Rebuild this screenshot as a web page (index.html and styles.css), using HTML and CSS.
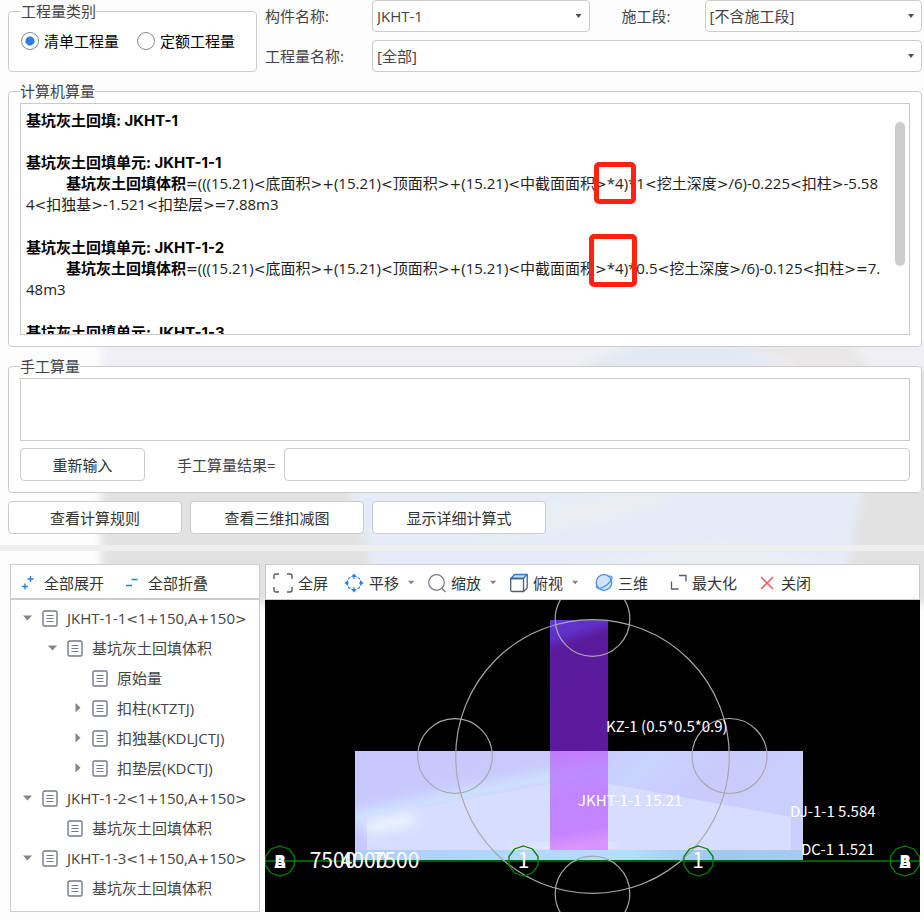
FILE: index.html
```html
<!DOCTYPE html>
<html lang="zh-CN">
<head>
<meta charset="utf-8">
<title>查看工程量计算式</title>
<link rel="stylesheet" href="styles.css">
</head>
<body>
<svg class="hidden" aria-hidden="true">
  <symbol id="doc" viewBox="0 0 16 17"><rect x="1" y="1" width="14" height="15" rx="1.5" fill="#fff" stroke="#747a8c" stroke-width="1.4"/><path d="M4.5 5.5h7M4.5 8.5h7M4.5 11.5h7" stroke="#747a8c" stroke-width="1.2"/></symbol>
  <symbol id="down" viewBox="0 0 10 6"><path d="M0 .5h9L4.500 5.500z" fill="#858585"/></symbol>
  <symbol id="right" viewBox="0 0 6 10"><path d="M.5 0v9.500L5.500 4.700z" fill="#858585"/></symbol>
</svg>

<div class="backdrop" aria-hidden="true">
  <svg viewBox="0 0 924 270" preserveAspectRatio="none">
    <defs><filter id="soft"><feGaussianBlur stdDeviation="5"/></filter></defs>
    <g filter="url(#soft)">
      <rect x="101" y="4" width="840" height="260" fill="#e2e2e2"/>
      <path d="M101 -10H940V30H101z" fill="#f1f0f6"/>
      <path d="M570 30L640 0H735L790 30z" fill="#e3e9f3"/>
      <path d="M735 0H850L870 30H800z" fill="#e9e7e8"/>
      <path d="M345 140H865L835 280H390z" fill="#e5ecf7"/>
      <path d="M470 180L690 145L620 175L480 200z" fill="#e9eff0"/>
      <path d="M500 240L720 205L860 230V270H500z" fill="#e8eff3"/>
    </g>
  </svg>
</div>

<main class="window">
  <section class="filters">
    <fieldset class="group kind">
      <legend>工程量类别</legend>
      <div class="radios">
        <label><input type="radio" name="kind" checked>清单工程量</label>
        <label><input type="radio" name="kind">定额工程量</label>
      </div>
    </fieldset>
    <div class="fields">
      <label for="component">构件名称:</label>
      <div class="select"><select id="component"><option>JKHT-1</option></select></div>
      <label class="second" for="stage">施工段:</label>
      <div class="select"><select id="stage"><option>[不含施工段]</option></select></div>
      <label for="quantity">工程量名称:</label>
      <div class="select wide"><select id="quantity"><option>[全部]</option></select></div>
    </div>
  </section>

  <fieldset class="group">
    <legend>计算机算量</legend>
    <div class="log">
      <div class="log-text">
        <div class="unit"><b>基坑灰土回填: JKHT-1</b></div>
        <div class="unit"><b>基坑灰土回填单元: JKHT-1-1</b><p><b>基坑灰土回填体积</b><i>=</i>(((15.21)<i>&lt;</i>底面积<i>&gt;+</i>(15.21)<i>&lt;</i>顶面积<i>&gt;+</i>(15.21)<i>&lt;</i>中截面面积<i>&gt;</i>*4)*1<i>&lt;</i>挖土深度<i>&gt;</i>/6)-0.225<i>&lt;</i>扣柱<i>&gt;</i>-5.58<br>4<i>&lt;</i>扣独基<i>&gt;</i>-1.521<i>&lt;</i>扣垫层<i>&gt;=</i>7.88m3</p></div>
        <div class="unit"><b>基坑灰土回填单元: JKHT-1-2</b><p><b>基坑灰土回填体积</b><i>=</i>(((15.21)<i>&lt;</i>底面积<i>&gt;+</i>(15.21)<i>&lt;</i>顶面积<i>&gt;+</i>(15.21)<i>&lt;</i>中截面面积<i>&gt;</i>*4)*0.5<i>&lt;</i>挖土深度<i>&gt;</i>/6)-0.125<i>&lt;</i>扣柱<i>&gt;=</i>7.<br>48m3</p></div>
        <div class="unit"><b>基坑灰土回填单元: JKHT-1-3</b></div>
      </div>
      <div class="thumb"></div>
      <div class="mark mark-a"></div>
      <div class="mark mark-b"></div>
    </div>
  </fieldset>

  <fieldset class="group manual">
    <legend>手工算量</legend>
    <textarea aria-label="手工算量"></textarea>
    <div class="result">
      <button type="button" class="btn">重新输入</button>
      <label for="result">手工算量结果=</label>
      <input id="result" type="text">
    </div>
  </fieldset>

  <div class="actions">
    <button type="button" class="btn">查看计算规则</button>
    <button type="button" class="btn">查看三维扣减图</button>
    <button type="button" class="btn">显示详细计算式</button>
  </div>

  <div class="splitter"></div>

  <section class="panes">
    <div class="pane tree-pane">
      <div class="bar tree-bar">
        <button type="button"><svg width="12" height="14" viewBox="0 0 12 14"><path d="M8.500 0v6M5.500 3h6M3 7.500v6M0 10.500h6" stroke="#2b7de0" stroke-width="1.400"/></svg>全部展开</button>
        <button type="button"><svg width="12" height="14" viewBox="0 0 12 14"><path d="M5.500 3.500h6M0 9.500h6" stroke="#2b7de0" stroke-width="1.400"/></svg>全部折叠</button>
      </div>
      <ul class="tree">
        <li class="l1"><svg class="tw"><use href="#down"/></svg><svg class="ic"><use href="#doc"/></svg><span>JKHT-1-1<i>&lt;</i>1<i>+</i>150,A<i>+</i>150<i>&gt;</i></span></li>
        <li class="l2"><svg class="tw"><use href="#down"/></svg><svg class="ic"><use href="#doc"/></svg>基坑灰土回填体积</li>
        <li class="l3"><span class="tw"></span><svg class="ic"><use href="#doc"/></svg>原始量</li>
        <li class="l3"><svg class="tw side"><use href="#right"/></svg><svg class="ic"><use href="#doc"/></svg>扣柱(KTZTJ)</li>
        <li class="l3"><svg class="tw side"><use href="#right"/></svg><svg class="ic"><use href="#doc"/></svg>扣独基(KDLJCTJ)</li>
        <li class="l3"><svg class="tw side"><use href="#right"/></svg><svg class="ic"><use href="#doc"/></svg>扣垫层(KDCTJ)</li>
        <li class="l1"><svg class="tw"><use href="#down"/></svg><svg class="ic"><use href="#doc"/></svg><span>JKHT-1-2<i>&lt;</i>1<i>+</i>150,A<i>+</i>150<i>&gt;</i></span></li>
        <li class="l2"><span class="tw"></span><svg class="ic"><use href="#doc"/></svg>基坑灰土回填体积</li>
        <li class="l1"><svg class="tw"><use href="#down"/></svg><svg class="ic"><use href="#doc"/></svg><span>JKHT-1-3<i>&lt;</i>1<i>+</i>150,A<i>+</i>150<i>&gt;</i></span></li>
        <li class="l2"><span class="tw"></span><svg class="ic"><use href="#doc"/></svg>基坑灰土回填体积</li>
      </ul>
    </div>

    <div class="pane view-pane">
      <div class="bar view-bar">
        <button type="button" class="plain"><svg width="20" height="20" viewBox="0 0 20 20"><path d="M1 6V3q0-2 2-2h3M14 1h3q2 0 2 2v3M19 14v3q0 2-2 2h-3M6 19H3q-2 0-2-2v-3" fill="none" stroke="#555b6b" stroke-width="1.400"/></svg>全屏</button>
        <button type="button"><svg width="20" height="20" viewBox="0 0 20 20"><g fill="#2b83e8"><path d="M10 .5l3 3.500H7zM10 19.500l3-3.500H7zM.5 10L4 7v6zM19.500 10L16 7v6z"/></g><path d="M10 3v3M10 14v3M3 10h2M15 10h2M4.500 6.500q0-2 2-2M13.500 4.500q2 0 2 2M15.500 13.500q0 2-2 2M6.500 15.500q-2 0-2-2" fill="none" stroke="#2b83e8" stroke-width="1.200"/></svg>平移<svg class="caret"><use href="#down"/></svg></button>
        <button type="button"><svg width="18" height="20" viewBox="0 0 18 20"><circle cx="8.500" cy="9.500" r="7.800" fill="none" stroke="#777c88" stroke-width="1.300"/><path d="M14 15.500l3.500 3.500" stroke="#777c88" stroke-width="1.500"/></svg>缩放<svg class="caret"><use href="#down"/></svg></button>
        <button type="button"><svg width="18" height="20" viewBox="0 0 18 20"><path d="M1 5.500l3.500-4h12.500l-3.500 4z" fill="#bcdcff" stroke="#2b7de0" stroke-width="1.300"/><path d="M.7 5.500h12.800v13H2.500Q.7 18.500.7 17zM17.200 1.500V14q0 1-.7 1.700l-3 2.800" fill="none" stroke="#555b6b" stroke-width="1.300"/></svg>俯视<svg class="caret"><use href="#down"/></svg></button>
        <button type="button" class="plain"><svg width="18" height="20" viewBox="0 0 18 20"><circle cx="9" cy="9.500" r="7.800" fill="#cfe3fb" stroke="#4b91e5" stroke-width="1.300"/><path d="M13.500 3.500Q17.500 2 17 5.500 14 12.500 5 15.500 1 16 1.500 12" fill="none" stroke="#4b91e5" stroke-width="1.300"/></svg>三维</button>
        <button type="button" class="plain"><svg width="20" height="20" viewBox="0 0 20 20"><path d="M12 2.500h7v6M4.500 8.500v7.500h7" fill="none" stroke="#555b6b" stroke-width="1.300"/></svg>最大化</button>
        <button type="button" class="plain"><svg width="20" height="20" viewBox="0 0 20 20"><path d="M5 4l12 12M17 4L5 16" stroke="#f4555a" stroke-width="1.500"/></svg>关闭</button>
      </div>
      <svg class="scene" viewBox="265 600 655 312" preserveAspectRatio="xMidYMid slice">
        <defs>
          <linearGradient id="slab" x1="0" y1="0" x2="1" y2=".25"><stop offset="0" stop-color="#c9c7fe"/><stop offset=".5" stop-color="#c9c9fd"/><stop offset=".65" stop-color="#c9d4ff"/><stop offset=".8" stop-color="#c9cafd"/><stop offset="1" stop-color="#cacffe"/></linearGradient>
          <linearGradient id="base"><stop offset="0" stop-color="#aecdfa"/><stop offset=".6" stop-color="#b4dffc"/><stop offset=".8" stop-color="#9fc8ee"/><stop offset="1" stop-color="#a6cbf0"/></linearGradient>
          <linearGradient id="col" x2=".15" y2="1"><stop offset="0" stop-color="#6236d4"/><stop offset=".14" stop-color="#6030c6"/><stop offset=".24" stop-color="#5a1a9c"/><stop offset="1" stop-color="#5c1a9c"/></linearGradient>
          <linearGradient id="colb" x2=".1" y2="1"><stop offset="0" stop-color="#c37afe"/><stop offset=".3" stop-color="#bd8cfe"/><stop offset=".5" stop-color="#c184ff"/><stop offset=".85" stop-color="#c584ff"/><stop offset="1" stop-color="#d994fb"/></linearGradient>
          <filter id="glow" x="-30%" y="-80%" width="160%" height="260%"><feGaussianBlur stdDeviation="6"/></filter>
          <clipPath id="slabclip"><path d="M355 751H802V849H355z"/></clipPath>
        </defs>
        <path d="M265 600H920V912H265z"/>
        <path d="M355 751H803V850H355z" fill="url(#slab)"/>
        <g clip-path="url(#slabclip)"><path d="M345 820L560 775" stroke="#cfe4ff" stroke-width="14" filter="url(#glow)"/></g>
        <path d="M367 817L550 784H610L791 817V850H367z" fill="#d6ddff"/>
        <g clip-path="url(#slabclip)"><path d="M367 822l48-9v11l-48 10z" fill="#eef8ff" filter="url(#glow)"/><path d="M510 850h100v-5z" fill="#fff" stroke="#f7faff" stroke-width="3" filter="url(#glow)"/></g>
        <path d="M355 850H803V860H355z" fill="url(#base)"/>
        <path d="M550 620H608V751H550z" fill="url(#col)"/>
        <path d="M550 751H608V850H550z" fill="url(#colb)"/>
        <path d="M265 861H920" stroke="#008000" stroke-width="1.500"/>
        <g fill="none" stroke="#a8a8a8" stroke-width="1.200"><circle cx="592.500" cy="756.500" r="136.800"/><circle cx="455" cy="756" r="37.300"/><circle cx="729.500" cy="756" r="37.500"/><circle cx="592.500" cy="619" r="37.300"/><circle cx="592.500" cy="893.500" r="37.300"/></g>
        <g fill="none" stroke="#008000" stroke-width="1.300">
          <path id="node" d="M280 846l9 3 5.500 7.500v9L289 873l-9 3-9-3-5.500-7.500v-9L271 849z"/>
          <use href="#node" x="243.500"/><use href="#node" x="418.500"/><use href="#node" x="625"/>
        </g>
        <g class="axis-text">
          <text x="280" y="868" class="pin">A</text><text x="280" y="868" class="pin">B</text>
          <text x="905" y="868" class="pin">A</text><text x="905" y="868" class="pin">B</text>
          <text x="523.500" y="868" class="num">1</text><text x="698" y="868" class="num">1</text>
          <text x="333" y="868" class="num">7500</text><text x="364" y="868" class="num">4000</text><text x="396" y="868" class="num">7500</text>
        </g>
        <g class="scene-text">
          <text x="606" y="732">KZ-1 (0.5*0.5*0.9)</text>
          <text x="578" y="806">JKHT-1-1 15.21</text>
          <text x="790" y="817">DJ-1-1 5.584</text>
          <text x="801" y="855">DC-1 1.521</text>
        </g>
      </svg>
    </div>
  </section>
</main>
</body>
</html>
```
FILE: styles.css
```css
* { box-sizing: border-box; }

body {
  margin: 0;
  background: #fdfdfd;
  color: #444;
  font: 15px/20px "Open Sans", "Noto Sans CJK SC", sans-serif;
}

button, input, select, textarea { font: inherit; color: inherit; margin: 0; }

/* comparison and arithmetic signs */
i { font: normal 14px/1 "DejaVu Sans", sans-serif; }

.hidden { position: absolute; width: 0; height: 0; }

.backdrop {
  position: absolute;
  top: 340px;
  left: 0;
  right: 0;
  height: 270px;
  overflow: hidden;
  z-index: -1;
}
.backdrop svg { display: block; width: 100%; height: 100%; }

.window {
  min-height: 100vh;
  display: flex;
  flex-direction: column;
}

.group {
  margin: 0 2px 9px 8px;
  min-width: 0;
  padding: 2px 11px 11px;
  border: 1px solid #ccc;
  border-radius: 4px;
  background: #fff;
}
.group legend { padding: 0; line-height: 20px; }

.filters {
  display: flex;
  gap: 8px;
  padding: 0 2px 0 8px;
  margin-bottom: 9px;
}
.kind { margin: 1px 0 0; flex: none; width: 249px; padding: 9px 12px 0; }
.radios { display: flex; gap: 18px; color: #000; }
.radios label { display: flex; align-items: center; gap: 5px; line-height: 22px; }
.radios input {
  appearance: none;
  width: 18px;
  height: 18px;
  border: 1px solid #888;
  border-radius: 50%;
  background: #fff;
}
.radios input:checked { background: radial-gradient(circle, #2b7de0 0 4px, #fff 5px); }

.fields {
  flex: 1;
  display: grid;
  grid-template-columns: 107px 1fr 115px 1fr;
  grid-auto-rows: 32px;
  row-gap: 8px;
  align-items: center;
}
.fields .second { padding-left: 32px; }
.wide { grid-column: span 3; }
.select { position: relative; height: 32px; }
.select select {
  appearance: none;
  width: 100%;
  height: 100%;
  padding: 0 4px;
  border: 1px solid #ccc;
  border-radius: 4px;
  background: #fff;
}
.select::after {
  content: "";
  position: absolute;
  right: 8px;
  top: 14px;
  width: 6px;
  height: 4px;
  background: #4a5060;
  clip-path: polygon(0 0, 100% 0, 50% 100%);
}

.log {
  position: relative;
  height: 232px;
  padding: 6px 5px 0;
  border: 1px solid #ccc;
  background: #fff;
  color: #222;
}
.log-text { height: 100%; overflow: hidden; line-height: 21px; white-space: nowrap; }
.log-text b { color: #000; font-family: Inter, "Noto Sans CJK SC", sans-serif; }
.unit { margin-bottom: 22px; }
.unit p { margin: 0; text-indent: 40px; }
.unit:first-child { margin-bottom: 21px; }
.thumb {
  position: absolute;
  top: 18px;
  right: 4px;
  width: 10px;
  height: 144px;
  border-radius: 5px;
  background: #ccc;
}
.mark { position: absolute; border: 5px solid #ff2313; border-radius: 5px; }
.mark-a { left: 573px; top: 58px; width: 42px; height: 42px; }
.mark-b { left: 568px; top: 130px; width: 48px; height: 53px; }

.manual { margin-bottom: 8px; }
.manual textarea {
  display: block;
  width: 100%;
  height: 63px;
  border: 1px solid #ccc;
  background: #fff;
  resize: none;
}
.result { display: flex; align-items: center; gap: 8px; margin-top: 7px; }
.result .btn { width: 125px; margin-right: 24px; }
.result input {
  flex: 1;
  min-width: 0;
  height: 33px;
  border: 1px solid #ccc;
  border-radius: 4px;
  background: #fff;
}

.btn {
  height: 33px;
  padding: 0;
  border: 1px solid #ccc;
  border-radius: 4px;
  background: #fff;
  color: #333;
}
.actions { display: flex; gap: 8px; padding-left: 8px; margin-bottom: 11px; }
.actions .btn { width: 174px; }

.splitter { height: 6px; margin-bottom: 13px; background: #efefef; }

.panes { flex: 1; display: flex; gap: 5px; padding: 0 4px 8px 10px; }
.pane { display: flex; flex-direction: column; }
.tree-pane { flex: none; width: 250px; border: 1px solid #ccc; background: #fff; }
.view-pane { flex: 1; min-width: 0; }

.bar { display: flex; align-items: center; height: 35px; color: #333; background: #fff; }
.bar button {
  display: flex;
  align-items: center;
  padding: 0;
  border: 0;
  background: none;
  white-space: nowrap;
}
.tree-bar { gap: 22px; padding: 2px 0 0 11px; border-bottom: 2px solid #ccc; }
.tree-bar button { gap: 10px; }
.view-bar { height: 36px; gap: 13px; padding: 1px 0 0 4px; border: 1px solid #ccc; }
.view-bar button { gap: 5px; }
.view-bar .plain { padding: 0 3px; }
.caret { width: 7px; height: 5px; margin-left: 4px; }

.tree { list-style: none; margin: 0; padding: 3px 0 0; }
.tree li { display: flex; align-items: center; height: 30px; white-space: nowrap; }
.tree .tw { width: 10px; height: 6px; margin-right: 9px; flex: none; }
.tree .side { height: 10px; }
.tree .ic { width: 16px; height: 17px; margin-right: 9px; flex: none; }
.tree .l1 { padding-left: 12px; }
.tree .l2 { padding-left: 37px; }
.tree .l3 { padding-left: 62px; }

.scene { flex: 1; display: block; width: 100%; min-height: 0; }
.scene-text { font: 15px "Noto Sans CJK SC", sans-serif; fill: #fff; }
.axis-text { font: 20px "Noto Sans CJK SC", sans-serif; fill: #fff; text-anchor: middle; }
.pin { font-size: 17px; font-weight: 700; }
.num { font-size: 21px; }
```
